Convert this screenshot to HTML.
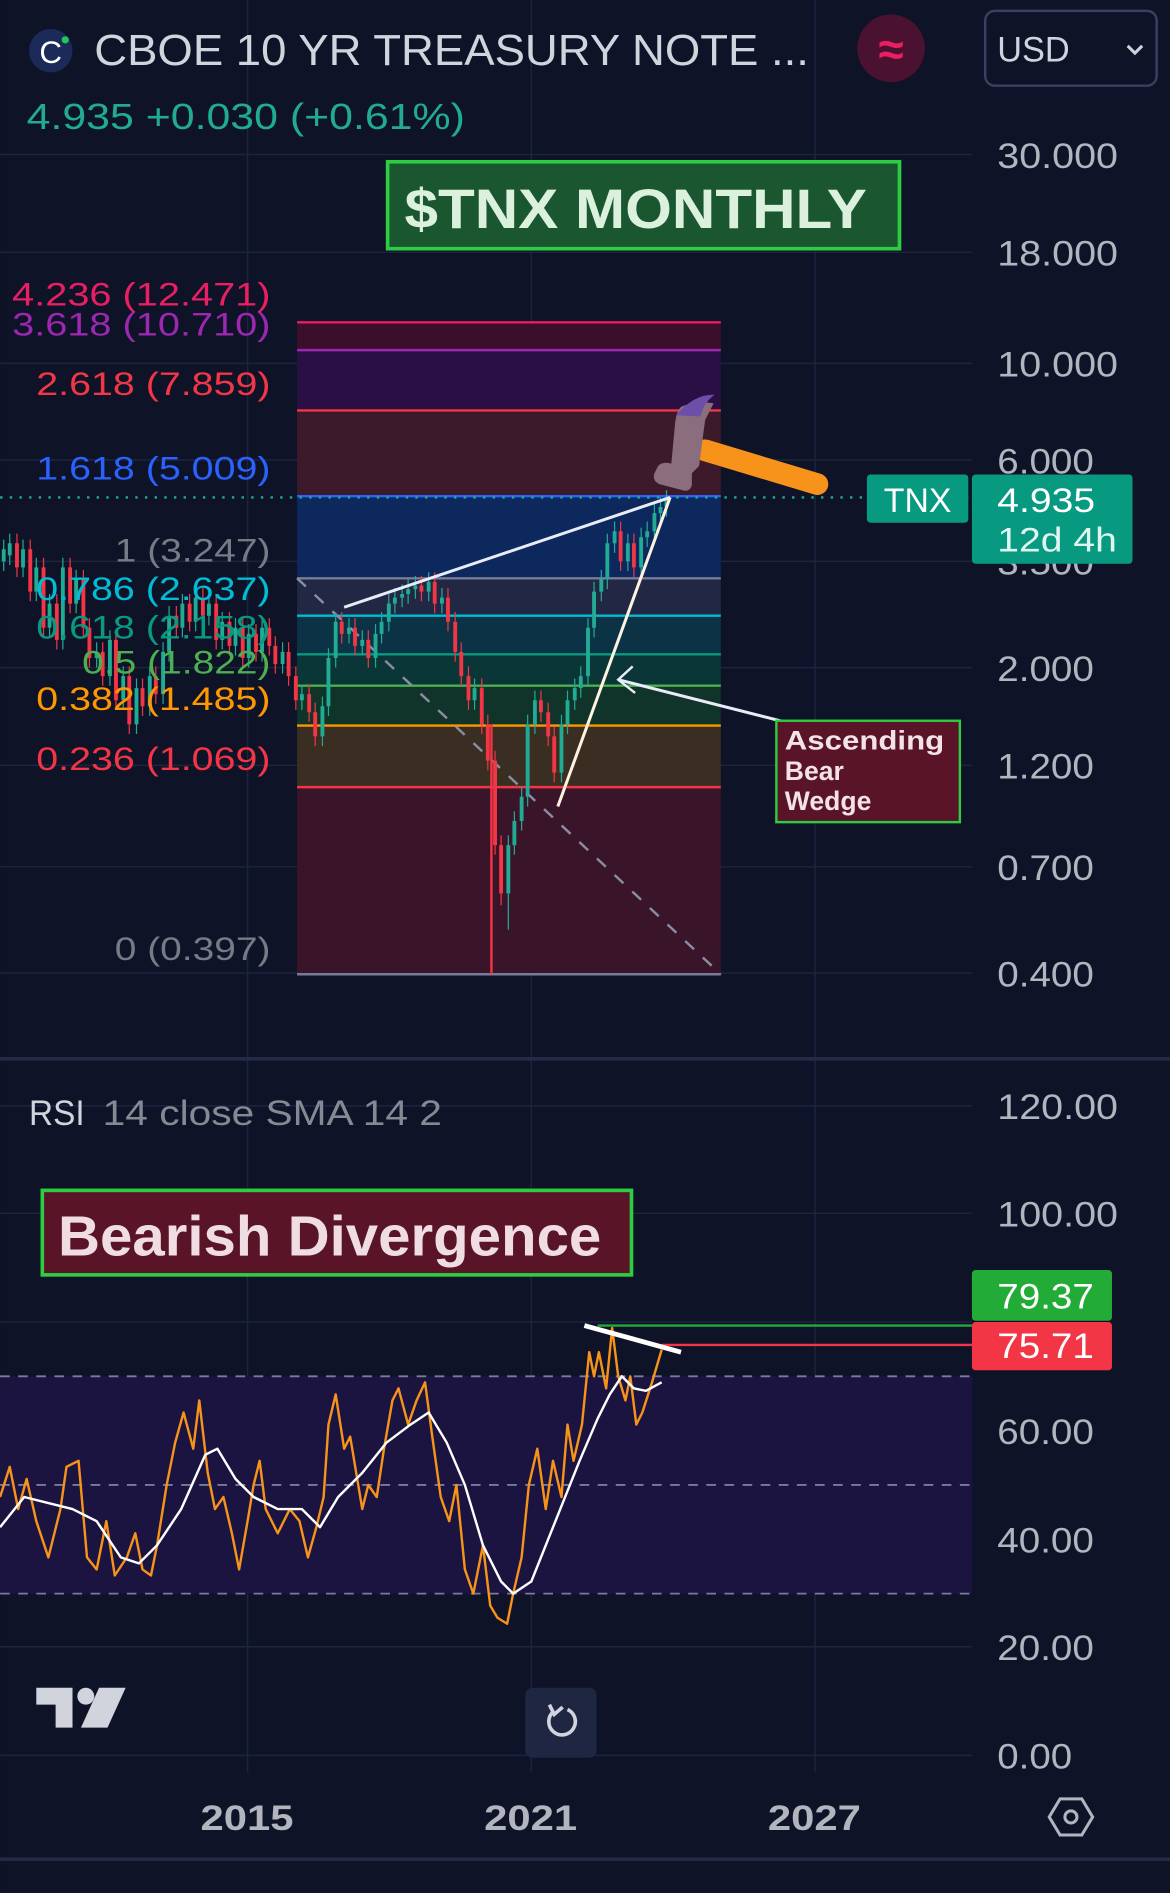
<!DOCTYPE html>
<html><head><meta charset="utf-8"><style>
html,body{margin:0;padding:0;background:#0e1328;}
svg{display:block}
text{font-family:"Liberation Sans",sans-serif}
</style></head><body>
<svg width="1170" height="1893" viewBox="0 0 969 1568" xmlns="http://www.w3.org/2000/svg">
<rect width="969" height="1568" fill="#0e1328"/>
<g stroke="#1d2440" stroke-width="1.2">
<line x1="0" y1="128" x2="805" y2="128"/><line x1="0" y1="209" x2="805" y2="209"/>
<line x1="0" y1="301" x2="805" y2="301"/><line x1="0" y1="381" x2="805" y2="381"/>
<line x1="0" y1="465" x2="805" y2="465"/><line x1="0" y1="553" x2="805" y2="553"/>
<line x1="0" y1="634" x2="805" y2="634"/><line x1="0" y1="718" x2="805" y2="718"/>
<line x1="0" y1="806" x2="805" y2="806"/>
<line x1="0" y1="916" x2="805" y2="916"/><line x1="0" y1="1005" x2="805" y2="1005"/>
<line x1="0" y1="1095" x2="805" y2="1095"/><line x1="0" y1="1185" x2="805" y2="1185"/>
<line x1="0" y1="1275" x2="805" y2="1275"/><line x1="0" y1="1364" x2="805" y2="1364"/>
<line x1="0" y1="1454" x2="805" y2="1454"/>
<line x1="205" y1="0" x2="205" y2="1468"/><line x1="440" y1="0" x2="440" y2="1468"/><line x1="675" y1="0" x2="675" y2="1468"/>
</g>
<line x1="0" y1="877" x2="969" y2="877" stroke="#252b45" stroke-width="3"/>
<line x1="0" y1="1540" x2="969" y2="1540" stroke="#252b45" stroke-width="3"/>

<circle cx="42" cy="42" r="18" fill="#1b2a58"/>
<text x="42" y="52" font-size="26" fill="#fff" text-anchor="middle">C</text>
<circle cx="54" cy="33" r="3" fill="#22c55e"/>
<text x="78" y="54" font-size="36" fill="#d1d4dc" textLength="592" lengthAdjust="spacingAndGlyphs">CBOE 10 YR TREASURY NOTE ...</text>
<circle cx="738" cy="40" r="28" fill="#4a1230"/>
<text x="738" y="54" font-size="38" fill="#e91e63" text-anchor="middle" font-weight="bold">≈</text>
<rect x="816" y="9" width="142" height="62" rx="8" fill="#0e1328" stroke="#3a4160" stroke-width="2"/>
<text x="826" y="51" font-size="29" fill="#d1d4dc" textLength="60" lengthAdjust="spacingAndGlyphs">USD</text>
<path d="M934 38 L940 44 L946 38" fill="none" stroke="#d1d4dc" stroke-width="2.5"/>
<text x="22" y="107" font-size="30" fill="#22ab94" textLength="363" lengthAdjust="spacingAndGlyphs">4.935  +0.030 (+0.61%)</text>

<g font-size="29" fill="#b2b5be">
<text x="826" y="139" textLength="100" lengthAdjust="spacingAndGlyphs">30.000</text><text x="826" y="220" textLength="100" lengthAdjust="spacingAndGlyphs">18.000</text><text x="826" y="312" textLength="100" lengthAdjust="spacingAndGlyphs">10.000</text>
<text x="826" y="392" textLength="80" lengthAdjust="spacingAndGlyphs">6.000</text><text x="826" y="476" textLength="80" lengthAdjust="spacingAndGlyphs">3.500</text><text x="826" y="564" textLength="80" lengthAdjust="spacingAndGlyphs">2.000</text>
<text x="826" y="645" textLength="80" lengthAdjust="spacingAndGlyphs">1.200</text><text x="826" y="729" textLength="80" lengthAdjust="spacingAndGlyphs">0.700</text><text x="826" y="817" textLength="80" lengthAdjust="spacingAndGlyphs">0.400</text>
</g>

<rect x="321" y="134" width="424" height="72" fill="#1a5630" stroke="#2ecc40" stroke-width="3"/>
<text x="335" y="189" font-size="46" font-weight="bold" fill="#dcf0de" textLength="383" lengthAdjust="spacingAndGlyphs">$TNX MONTHLY</text>

<rect x="246" y="267" width="351" height="23" fill="#3b0e2c"/>
<rect x="246" y="290" width="351" height="50" fill="#2a0f44"/>
<rect x="246" y="340" width="351" height="71" fill="#3d1a2a"/>
<rect x="246" y="411" width="351" height="68" fill="#0c285c"/>
<rect x="246" y="479" width="351" height="31" fill="#222844"/>
<rect x="246" y="510" width="351" height="32" fill="#0c3246"/>
<rect x="246" y="542" width="351" height="26" fill="#0b3638"/>
<rect x="246" y="568" width="351" height="33" fill="#10332a"/>
<rect x="246" y="601" width="351" height="51" fill="#3a2d22"/>
<rect x="246" y="652" width="351" height="155" fill="#3a1428"/>
<g stroke-width="2">
<line x1="246" y1="267" x2="597" y2="267" stroke="#e91e63"/>
<line x1="246" y1="290" x2="597" y2="290" stroke="#9c27b0"/>
<line x1="246" y1="340" x2="597" y2="340" stroke="#f23645"/>
<line x1="246" y1="411" x2="597" y2="411" stroke="#2962ff"/>
<line x1="246" y1="479" x2="597" y2="479" stroke="#787b9a"/>
<line x1="246" y1="510" x2="597" y2="510" stroke="#00bcd4"/>
<line x1="246" y1="542" x2="597" y2="542" stroke="#089981"/>
<line x1="246" y1="568" x2="597" y2="568" stroke="#4caf50"/>
<line x1="246" y1="601" x2="597" y2="601" stroke="#ff9800"/>
<line x1="246" y1="652" x2="597" y2="652" stroke="#f23645"/>
<line x1="246" y1="807" x2="597" y2="807" stroke="#787b9a"/>
</g>
<line x1="246" y1="479" x2="597" y2="807" stroke="#8a8ea4" stroke-width="2" stroke-dasharray="10 10"/>
<line x1="0" y1="412" x2="805" y2="412" stroke="#22ab94" stroke-width="2" stroke-dasharray="2 6"/>

<g fill="none">
<path stroke="#22ab94" stroke-width="1" d="M3 447V473M8 442V468M19 447V478M30 462V498M41 492V528M52 462V538M63 472V508M80 532V553M91 522V568M102 552V588M113 562V608M124 552V593M135 532V583M140 502V548M151 492V528M162 487V523M173 492V518M184 507V538M195 512V543M206 517V553M217 512V548M234 532V558M250 567V588M267 577V618M272 537V593M278 507V553M289 512V533M300 522V543M311 517V553M316 507V533M322 492V523M327 487V508M333 484V503M338 480V500M344 477V496M355 474V498M366 487V508M393 562V588M421 692V770M426 672V708M432 652V688M437 592V668M443 572V608M465 592V648M470 572V608M476 562V588M481 552V578M487 512V568M492 482V528M498 472V498M503 442V488M509 432V458M520 442V473M531 437V478M536 432V453M542 417V448M547 412V433M552 406V428"/>
<path stroke="#22ab94" stroke-width="3.2" d="M3 455V465M8 450V460M19 455V470M30 470V490M41 500V520M52 470V530M63 480V500M80 540V545M91 530V560M102 560V580M113 570V600M124 560V585M135 540V575M140 510V540M151 500V520M162 495V515M173 500V510M184 515V530M195 520V535M206 525V545M217 520V540M234 540V550M250 575V580M267 585V610M272 545V585M278 515V545M289 520V525M300 530V535M311 525V545M316 515V525M322 500V515M327 495V500M333 492V495M338 488V492M344 485V488M355 482V490M366 495V500M393 570V580M421 700V740M426 680V700M432 660V680M437 600V660M443 580V600M465 600V640M470 580V600M476 570V580M481 560V570M487 520V560M492 490V520M498 480V490M503 450V480M509 440V450M520 450V465M531 445V470M536 440V445M542 425V440M547 420V425M552 412V420"/>
<path stroke="#f23645" stroke-width="1" d="M14 442V478M25 447V498M36 462V528M47 492V538M58 462V508M69 472V528M74 512V553M85 532V568M96 522V588M107 552V608M118 562V593M129 552V583M146 502V528M157 492V523M168 487V518M179 492V538M190 507V543M201 512V553M212 517V548M223 512V543M228 527V558M239 532V568M245 552V588M256 567V598M261 582V618M283 507V533M294 512V543M305 522V553M349 477V498M360 474V508M371 487V523M377 507V548M382 532V568M388 552V588M399 562V608M404 592V638M410 622V708M415 692V750M448 572V598M454 582V618M459 602V648M514 432V473M525 442V478"/>
<path stroke="#f23645" stroke-width="3.2" d="M14 450V470M25 455V490M36 470V520M47 500V530M58 470V500M69 480V520M74 520V545M85 540V560M96 530V580M107 560V600M118 570V585M129 560V575M146 510V520M157 500V515M168 495V510M179 500V530M190 515V535M201 520V545M212 525V540M223 520V535M228 535V550M239 540V560M245 560V580M256 575V590M261 590V610M283 515V525M294 520V535M305 530V545M349 485V490M360 482V500M371 495V515M377 515V540M382 540V560M388 560V580M399 570V600M404 600V630M410 630V700M415 700V740M448 580V590M454 590V610M459 610V640M514 440V465M525 450V470"/>
<line x1="407" y1="600" x2="407" y2="807" stroke="#f23645" stroke-width="2"/>
</g>

<g font-size="27" text-anchor="end">
<text x="224" y="253" fill="#e91e63" textLength="214" lengthAdjust="spacingAndGlyphs">4.236 (12.471)</text>
<text x="224" y="278" fill="#9c27b0" textLength="214" lengthAdjust="spacingAndGlyphs">3.618 (10.710)</text>
<text x="224" y="327" fill="#f23645" textLength="194" lengthAdjust="spacingAndGlyphs">2.618 (7.859)</text>
<text x="224" y="397" fill="#2962ff" textLength="194" lengthAdjust="spacingAndGlyphs">1.618 (5.009)</text>
<text x="224" y="465" fill="#787b86" textLength="129" lengthAdjust="spacingAndGlyphs">1 (3.247)</text>
<text x="224" y="497" fill="#00bcd4" textLength="194" lengthAdjust="spacingAndGlyphs">0.786 (2.637)</text>
<text x="224" y="529" fill="#089981" textLength="194" lengthAdjust="spacingAndGlyphs">0.618 (2.158)</text>
<text x="224" y="558" fill="#4caf50" textLength="156" lengthAdjust="spacingAndGlyphs">0.5 (1.822)</text>
<text x="224" y="588" fill="#ff9800" textLength="194" lengthAdjust="spacingAndGlyphs">0.382 (1.485)</text>
<text x="224" y="638" fill="#f23645" textLength="194" lengthAdjust="spacingAndGlyphs">0.236 (1.069)</text>
<text x="224" y="795" fill="#787b86" textLength="129" lengthAdjust="spacingAndGlyphs">0 (0.397)</text>
</g>

<line x1="285" y1="503" x2="555" y2="412" stroke="#e8ecf8" stroke-width="2.5"/>
<line x1="462" y1="668" x2="555" y2="412" stroke="#fff3e0" stroke-width="2.5"/>
<line x1="650" y1="598" x2="512" y2="563" stroke="#e8ecf8" stroke-width="2.5"/>
<path d="M524 552 L512 563 L526 574" fill="none" stroke="#e8ecf8" stroke-width="2"/>
<rect x="643" y="597" width="152" height="84" fill="#5a1428" stroke="#2ecc40" stroke-width="2"/>
<g font-size="22" font-weight="bold" fill="#f3e3e8">
<text x="650" y="621" textLength="132" lengthAdjust="spacingAndGlyphs">Ascending</text><text x="650" y="646">Bear</text><text x="650" y="671">Wedge</text>
</g>

<line x1="584" y1="373" x2="677" y2="401" stroke="#f7931a" stroke-width="18" stroke-linecap="round"/>
<path d="M564 337 Q576 332 591 334 L584 348 L579 386 L573 392 L573 402 Q571 408 565 406 L546 401 Q540 398 542 392 L545 386 Q549 382 556 384 L559 352 Q560 341 564 337 Z" fill="#8a6e7e"/>
<path d="M560 344 Q575 326 592 327 Q583 333 580 345 Z" fill="#6b4fa8"/>

<rect x="718" y="393" width="84" height="40" rx="3" fill="#089981"/>
<text x="760" y="424" font-size="28" fill="#fff" text-anchor="middle">TNX</text>
<rect x="805" y="393" width="133" height="74" rx="3" fill="#089981"/>
<text x="826" y="424" font-size="28" fill="#fff" textLength="81" lengthAdjust="spacingAndGlyphs">4.935</text>
<text x="826" y="457" font-size="28" fill="#e0f5ef" textLength="99" lengthAdjust="spacingAndGlyphs">12d 4h</text>

<text x="24" y="932" font-size="29" fill="#d1d4dc" textLength="46" lengthAdjust="spacingAndGlyphs">RSI</text>
<text x="85" y="932" font-size="29" fill="#868993" textLength="281" lengthAdjust="spacingAndGlyphs">14 close SMA 14 2</text>
<rect x="0" y="1140" width="805" height="180" fill="#1b1440"/>
<g stroke="#787b9a" stroke-width="1.5" stroke-dasharray="8 7">
<line x1="0" y1="1140" x2="805" y2="1140"/><line x1="0" y1="1230" x2="805" y2="1230"/><line x1="0" y1="1320" x2="805" y2="1320"/>
</g>
<g font-size="29" fill="#b2b5be">
<text x="826" y="927" textLength="100" lengthAdjust="spacingAndGlyphs">120.00</text><text x="826" y="1016" textLength="100" lengthAdjust="spacingAndGlyphs">100.00</text><text x="826" y="1196" textLength="80" lengthAdjust="spacingAndGlyphs">60.00</text>
<text x="826" y="1286" textLength="80" lengthAdjust="spacingAndGlyphs">40.00</text><text x="826" y="1375" textLength="80" lengthAdjust="spacingAndGlyphs">20.00</text><text x="826" y="1465" textLength="62" lengthAdjust="spacingAndGlyphs">0.00</text>
</g>
<rect x="35" y="986" width="488" height="70" fill="#5a1428" stroke="#2ecc40" stroke-width="3"/>
<text x="48" y="1040" font-size="47" font-weight="bold" fill="#f0dde3" textLength="450" lengthAdjust="spacingAndGlyphs">Bearish Divergence</text>

<polyline fill="none" stroke="#f7931a" stroke-width="2" stroke-linejoin="round" points="0,1240 8,1215 15,1250 22,1225 30,1260 40,1290 50,1250 55,1215 65,1210 72,1290 80,1300 88,1260 95,1305 105,1290 112,1270 118,1300 125,1305 130,1280 138,1230 145,1195 152,1170 160,1200 165,1160 172,1220 178,1250 185,1240 192,1270 198,1300 205,1260 210,1230 215,1210 220,1250 230,1270 240,1250 248,1260 255,1290 262,1265 268,1240 272,1180 278,1155 285,1200 290,1190 300,1250 305,1230 312,1240 318,1200 325,1160 330,1150 338,1180 345,1160 352,1145 358,1190 365,1240 372,1260 378,1230 385,1300 392,1320 400,1280 406,1330 412,1340 420,1345 425,1320 432,1290 438,1230 445,1200 452,1250 458,1210 465,1240 470,1180 475,1210 482,1180 488,1120 492,1140 496,1120 502,1150 507,1100 512,1140 518,1160 522,1140 527,1180 532,1170 540,1145 548,1118"/>
<polyline fill="none" stroke="#ffffff" stroke-width="2" stroke-linejoin="round" points="0,1265 20,1240 40,1245 60,1250 80,1260 100,1290 115,1295 130,1280 150,1250 170,1205 180,1200 195,1225 210,1240 230,1250 250,1250 265,1265 280,1240 300,1220 320,1195 340,1180 355,1170 370,1195 385,1230 400,1280 415,1310 425,1320 440,1310 460,1260 480,1210 495,1175 505,1155 515,1140 525,1150 535,1152 548,1145"/>
<line x1="495" y1="1098" x2="805" y2="1098" stroke="#22ab37" stroke-width="2"/>
<line x1="548" y1="1114" x2="805" y2="1114" stroke="#f23645" stroke-width="2"/>
<line x1="484" y1="1098" x2="564" y2="1120" stroke="#fff" stroke-width="4"/>
<rect x="805" y="1052" width="116" height="42" rx="3" fill="#22ab37"/>
<text x="826" y="1084" font-size="29" fill="#fff" textLength="80" lengthAdjust="spacingAndGlyphs">79.37</text>
<rect x="805" y="1095" width="116" height="40" rx="3" fill="#f23645"/>
<text x="826" y="1125" font-size="29" fill="#fff" textLength="80" lengthAdjust="spacingAndGlyphs">75.71</text>

<g fill="#d1d4dc">
<path d="M30 1398 H60 V1431 H46 V1412 H30 Z"/>
<circle cx="71" cy="1405" r="7"/>
<path d="M82 1398 H104 L89 1431 H67 Z"/>
</g>
<rect x="435" y="1398" width="59" height="58" rx="6" fill="#1e2642"/>
<path d="M458 1418 A11 11 0 1 0 470 1416" fill="none" stroke="#d1d4dc" stroke-width="3"/>
<path d="M455 1412 L459 1420 L466 1414" fill="none" stroke="#d1d4dc" stroke-width="3"/>

<g font-size="29" font-weight="bold" fill="#b2b5be">
<text x="166" y="1516" textLength="77" lengthAdjust="spacingAndGlyphs">2015</text><text x="401" y="1516" textLength="77" lengthAdjust="spacingAndGlyphs">2021</text><text x="636" y="1516" textLength="77" lengthAdjust="spacingAndGlyphs">2027</text>
</g>
<path d="M878 1490 L896 1490 L905 1505 L896 1520 L878 1520 L869 1505 Z" fill="none" stroke="#b2b5be" stroke-width="2.5"/>
<circle cx="887" cy="1505" r="5" fill="none" stroke="#b2b5be" stroke-width="2.5"/>
</svg>
</body></html>
